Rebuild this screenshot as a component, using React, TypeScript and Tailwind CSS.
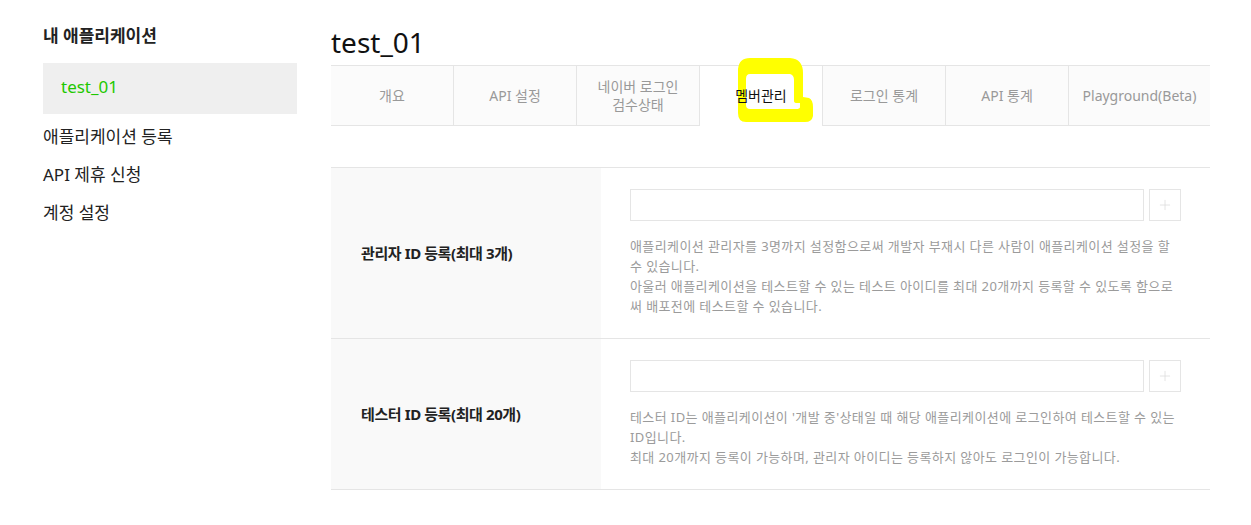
import { Plus } from 'lucide-react';

const tabs = ['개요', 'API 설정', '네이버 로그인\n검수상태', '멤버관리', '로그인 통계', 'API 통계', 'Playground(Beta)'];
const activeTab = 3;

const rows = [
  {
    label: '관리자 ID 등록(최대 3개)',
    lines: [
      '애플리케이션 관리자를 3명까지 설정함으로써 개발자 부재시 다른 사람이 애플리케이션 설정을 할',
      '수 있습니다.',
      '아울러 애플리케이션을 테스트할 수 있는 테스트 아이디를 최대 20개까지 등록할 수 있도록 함으로',
      '써 배포전에 테스트할 수 있습니다.',
    ],
  },
  {
    label: '테스터 ID 등록(최대 20개)',
    lines: [
      "테스터 ID는 애플리케이션이 '개발 중'상태일 때 해당 애플리케이션에 로그인하여 테스트할 수 있는",
      'ID입니다.',
      '최대 20개까지 등록이 가능하며, 관리자 아이디는 등록하지 않아도 로그인이 가능합니다.',
    ],
  },
];

// hand-drawn yellow marker loop around the active tab
const Highlight = () => (
  <svg
    className="absolute left-[30px] top-[-15px] z-0 overflow-visible"
    width="100"
    height="80"
    viewBox="0 0 100 80"
  >
    <path
      fillRule="evenodd"
      fill="#ffff00"
      d="M8 18 Q9 7 20 7 L60 7 Q73 8 73 22 L73 46 L79 47 Q83 49 83 56 L83 65 Q82 71 75 71 L16 71 Q8 71 8 62 Z M20 23 L60 23 Q64 24 64 29 L64 50 Q64 52 67 52 L70 52 L70 56 Q70 58 66 58 L20 58 Q16 58 16 54 L16 28 Q16 23 20 23 Z"
    />
  </svg>
);

const App = () => {
  return (
    <div
      className="flex min-h-[525px] bg-white pl-[43px] text-[#222]"
      style={{ fontFamily: '"Noto Sans", "Noto Sans CJK KR", sans-serif' }}
    >
      {/* sidebar */}
      <aside className="w-[254px] shrink-0 pt-[24px]">
        <h2 className="h-[24px] text-[17px] font-bold leading-[24px] text-[#222]">내 애플리케이션</h2>
        <div className="mt-[15px] flex h-[51px] items-center bg-[#efefef] pb-[3px] pl-[18px] text-[17px] text-[#1ec800]">
          test_01
        </div>
        <ul className="mt-[4px] text-[17px] text-[#222]">
          <li className="flex h-[38px] items-center">애플리케이션 등록</li>
          <li className="flex h-[38px] items-center">API 제휴 신청</li>
          <li className="flex h-[38px] items-center">계정 설정</li>
        </ul>
      </aside>

      {/* main */}
      <main className="ml-[34px] w-[879px] pt-[24px]">
        <h1 className="h-[41px] text-[28px] leading-[36px] text-[#111]">test_01</h1>

        <div className="flex h-[61px] border-t border-[#e5e5e5]">
          {tabs.map((t, i) => {
            const active = i === activeTab;
            const last = i === tabs.length - 1;
            return (
              <div
                key={t}
                className={`relative flex items-center justify-center text-center text-[14px] leading-[18px] whitespace-pre-line ${
                  last ? 'flex-1' : 'w-[123px] border-r border-[#e5e5e5]'
                } ${active ? 'bg-white text-[#111]' : 'border-b border-[#e5e5e5] bg-[#fbfbfb] text-[#999]'}`}
              >
                {active && <Highlight />}
                <span className="relative z-10">{t}</span>
              </div>
            );
          })}
        </div>

        <div className="mt-[41px] border-t border-[#e5e5e5]">
          {rows.map((r) => (
            <div key={r.label} className="flex border-b border-[#e5e5e5]">
              <div className="flex w-[270px] shrink-0 items-center bg-[#f9f9f9] pl-[30px] text-[15px] font-bold tracking-[-0.4px] text-[#222]">
                {r.label}
              </div>
              <div className="flex-1 px-[29px] pt-[21px] pb-[22px]">
                <div className="flex gap-[5px]">
                  <input type="text" className="h-[32px] flex-1 border border-[#e5e5e5] outline-none" />
                  <button className="flex h-[32px] w-[32px] items-center justify-center border border-[#e5e5e5] text-[#ddd]">
                    <Plus size={16} strokeWidth={1.2} />
                  </button>
                </div>
                <p className="mt-[15px] text-[13px] leading-[20px] tracking-[0.4px] text-[#9b9b9b]">
                  {r.lines.map((l) => (
                    <span key={l} className="block whitespace-nowrap">
                      {l}
                    </span>
                  ))}
                </p>
              </div>
            </div>
          ))}
        </div>
      </main>
    </div>
  );
};

export default App;
